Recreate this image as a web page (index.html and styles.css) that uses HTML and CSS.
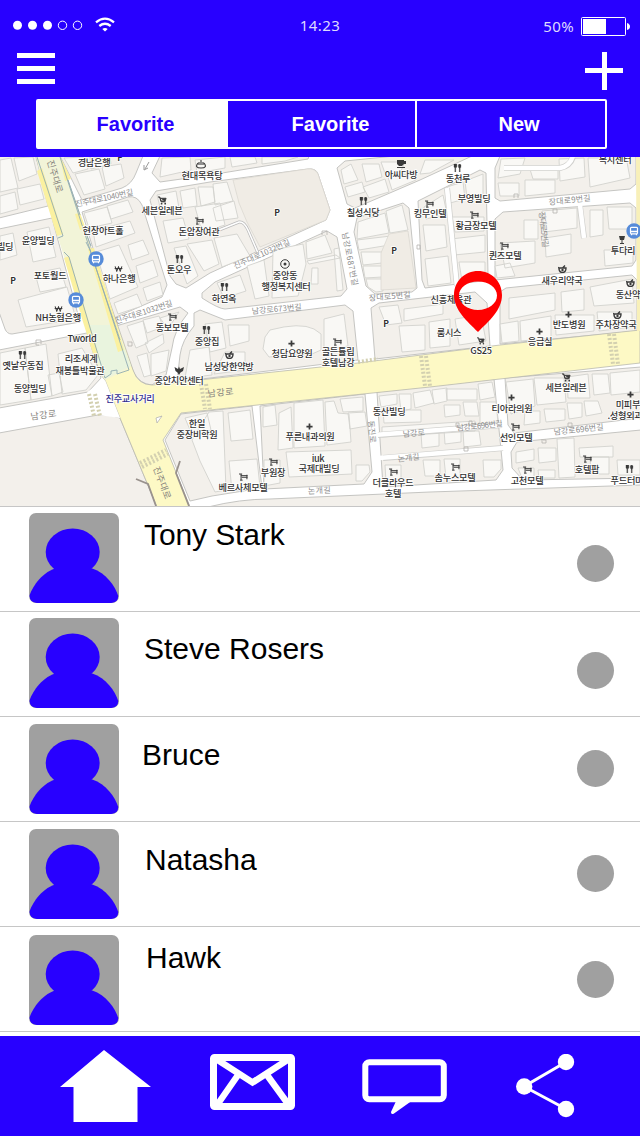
FILE: index.html
```html
<!DOCTYPE html>
<html lang="en">
<head>
<meta charset="utf-8">
<title>Favorites</title>
<link rel="stylesheet" href="styles.css">
</head>
<body>
<svg class="defs" width="0" height="0" aria-hidden="true">
  <symbol id="avatar" viewBox="0 0 90 90"><ellipse cx="43.7" cy="39" rx="27" ry="23.5"/><path d="M26 55.500C12 60 2 76 .5 83Q1 90 8 90H82Q89 90 89.3 83C86 73 77 60 63.3 55.500Z"/></symbol>
  <symbol id="fork" viewBox="0 0 10 9"><path d="M1 0V3Q1 4 2 4V9H3V4Q4.300 4 4.300 3V0M2.600 0V4M7 9V5Q5.800 4 5.800 2T7.400 0Q9 0 9 2T8 5V9Z" fill="#3a3a3a" stroke="#3a3a3a" stroke-width=".3"/></symbol>
  <symbol id="bed" viewBox="0 0 10 8"><path d="M0 .7H3.500M1.200 7.500H4M2.300 .7V7.500M2 2.500H9.500M3 4.300H9.500M8.800 1.500V6.500" fill="none" stroke="#3a3a3a" stroke-width="1.100"/></symbol>
  <symbol id="cart" viewBox="0 0 10 9"><path d="M0 .5H2L3.500 6H8.500M2.300 2H9L8 5H3Z" fill="#3a3a3a" stroke="#3a3a3a"/><circle cx="4" cy="8" r="1"/><circle cx="8" cy="8" r="1"/></symbol>
  <symbol id="cross" viewBox="0 0 8 8"><path d="M4 .5V7.500M.5 4H7.500" stroke="#3a3a3a" stroke-width="2"/></symbol>
  <symbol id="won" viewBox="0 0 9 7"><path d="M.5 .5L2.500 6L4.500 1L6.500 6L8.500 .5M0 3H9" fill="none" stroke="#3a3a3a" stroke-width="1.200"/></symbol>
  <symbol id="pot" viewBox="0 0 9 8"><path d="M1 3H8Q8 7.500 4.500 7.500T1 3L0 2.500M4.500 3L7 .5" fill="none" stroke="#3a3a3a" stroke-width="1.400"/><circle cx="4.500" cy="5" r="1.200"/></symbol>
  <symbol id="bus" viewBox="0 0 16 16"><circle cx="8" cy="8" r="7.700" fill="#568bd9"/><rect x="4.500" y="4.300" width="7" height="6.500" rx="1" fill="none" stroke="#fff" stroke-width="1.200"/><path d="M4.500 8.500H11.500M5.500 12.300V11M10.500 12.300V11" stroke="#fff" stroke-width="1.300"/></symbol>
</svg>

<header class="header">
  <div class="status">
    <svg class="signal" width="104" height="18" viewBox="12 15 104 18">
      <g fill="#fff"><circle cx="17.500" cy="25.300" r="4.500"/><circle cx="32.500" cy="25.300" r="4.500"/><circle cx="47.500" cy="25.300" r="4.500"/></g>
      <g fill="none" stroke="#fff"><circle cx="62.500" cy="25.300" r="4.200"/><circle cx="77.500" cy="25.300" r="4.200"/></g>
      <path d="M96 22.300Q105 15 114 22.300M99.300 26Q105 21.600 110.700 26" fill="none" stroke="#fff" stroke-width="2.300"/><path d="M102.300 29Q105 27 107.700 29L105 31.500Z" fill="#fff"/>
    </svg>
    <span class="time">14:23</span>
    <span class="battery"><span>50%</span>
      <svg width="50" height="20" viewBox="0 0 50 20"><rect x=".5" y=".5" width="44" height="18" rx="1" fill="none" stroke="#fff"/><rect x="2" y="2" width="23" height="15" fill="#fff"/><path d="M46 6Q49 7 49 9.500T46 13Z" fill="#fff"/></svg>
    </span>
  </div>
  <div class="actions">
    <svg width="38" height="31" viewBox="0 0 38 31"><path d="M0 2.500H38M0 15.500H38M0 28.500H38" stroke="#fff" stroke-width="5"/></svg>
    <svg width="38" height="38" viewBox="0 0 38 38"><path d="M0 18.500H38M19.500 0V38" stroke="#fff" stroke-width="5"/></svg>
  </div>
  <nav class="tabs">
    <a class="tab tab-active">Favorite</a><a class="tab tab-middle">Favorite</a><a class="tab tab-last">New</a>
  </nav>
</header>

<svg class="map" width="640" height="349" viewBox="0 157 640 349">
  <rect x="0" y="157" width="640" height="349" fill="#fff"/>
  <g class="block">
    <path d="M-1 156H36L48 206L-1 218Z"/>
    <path d="M-1 229L52 218L80 322L12 334Q7 334 5 329L-1 312Z"/>
    <path d="M-1 350L87 333L101 378L88 392L-1 408Z"/>
    <path d="M-1 433L98 415Q110 414 120 418L157 507H-1Z"/>
    <path d="M60 156H143L136 173Q132 184 122 188L82 200Z"/>
    <path d="M82 212L128 197Q137 195 142 205L167 285L162 297L114 318Z"/>
    <path d="M160 156L152 173L160 182L210 175L308 159L309 156Z"/>
    <path d="M150 200L156 191L210 182L308 169Q316 168 318 174L330 210L326 220L210 273L186 288L176 284L170 276Z"/>
    <path d="M202 293L215 282L327 231L337 237L347 289L341 296L225 309Q219 309 202 298Z"/>
    <path d="M194 313L200 310L225 320L345 305L353 311L358 360L177 382L180 355Q182 340 194 326Z"/>
    <path d="M116 326L180 307L188 313Q174 330 172 348L166 375L152 385Q140 384 134 373Z"/>
    <path d="M337 168L345 161L395 156H472L420 180L355 208L347 204Z"/>
    <path d="M357 218L403 203L409 208L417 288L412 292L375 294L366 286L354 232Z"/>
    <path d="M418 201L480 170L486 173L488 275L482 281L425 288L422 280Z"/>
    <path d="M500 156L495 168V198L500 201L630 189L636 184V156Z"/>
    <path d="M495 219L503 212L630 203L636 208V260L632 266L495 280Z"/>
    <path d="M371 308L379 303L475 292L487 303L490 346L375 359Z"/>
    <path d="M500 292L506 288L632 275L637 280V331L500 344Z"/>
    <path d="M181 414L252 406L262 488L212 496L190 501L165 440Z"/>
    <path d="M260 406L365 394L372 472L364 484L264 489Z"/>
    <path d="M377 392L494 379L503 470L496 480L383 487Z"/>
    <path d="M505 378L641 367V418L514 433L508 425Z"/>
    <path d="M517 442L641 430V478L523 480L512 468L511 452Z"/>
    <path d="M208 507Q240 499 270 499L430 492L641 485V507Z"/>
  </g>
  <g class="parcel">
    <path d="M0 160L11 158L18 188L0 192ZM14 158L33 157L37 174L19 181ZM17 189L40 184L44 199L20 205ZM0 196L15 192L18 209L0 214ZM27 232L49 227L56 257L33 262ZM0 236L13 233L17 255L0 260ZM35 273L60 268L66 287L40 292ZM18 300L67 287L76 319L26 327Z"/>
    <path d="M0 353L25 348L31 400L0 405ZM25 348L46 344L52 396L31 400ZM58 354L82 348L98 375L86 390L62 394ZM48 375L59 373L63 392L52 396Z"/>
    <path d="M64 158L83 157L88 169L73 173ZM75 174L99 169L105 189L84 195ZM102 167L121 164L124 178L106 186ZM90 157L110 157L111 164L91 169ZM84 213L107 207L112 223L89 228ZM107 206L128 200L133 212L111 219ZM93 231L130 221L135 233L96 247ZM96 252L119 245L138 287L110 299ZM128 245L143 240L149 254L132 260ZM136 266L153 260L158 276L140 283ZM114 303L137 294L142 306L118 314ZM143 288L160 282L163 295L147 301Z"/>
    <path d="M162 158L190 157L191 170L160 177ZM195 160L225 157V168L197 173ZM230 157H255L257 163L232 167ZM262 157H298L285 161L262 164Z"/>
    <path d="M157 195L176 191L179 208L161 211ZM180 191L195 188L197 206L183 208ZM198 187H213L215 202L201 206ZM213 184L227 182L233 201L215 205ZM163 221L183 218L189 239L168 243ZM195 207L220 203L225 225L202 232ZM174 248L186 246L198 276L187 284ZM187 244L212 240L219 264L204 271ZM214 238L237 234L250 256L222 267ZM213 208L234 201L238 218L216 221Z"/>
    <path d="M273 250L303 244L306 264L298 296L272 298ZM247 266L264 260L269 296L255 299ZM217 283L240 275L246 291L224 298ZM306 242L325 235L332 253L307 259ZM307 261L336 255L340 258L309 264ZM312 268H318V284H311ZM334 249L339 248L343 290L337 291Z"/>
    <path d="M270 330Q300 322 314 329L321 334V350L312 354L269 357L263 349L265 337ZM324 319L344 314L348 346L324 350ZM205 324L222 322L226 348L210 352ZM228 325H249V341L230 346ZM190 350L209 347L212 375L185 378ZM225 352H245V370L214 374Z"/>
    <path d="M127 326L143 321L148 343L136 348ZM143 320L159 316L163 327L147 333ZM160 318L179 312L168 329ZM145 343L163 334L164 343L149 353ZM151 354L169 350L166 371L151 376ZM137 356L147 353L151 375L144 377Z"/>
    <path d="M341 170L351 164L358 180L344 184ZM362 164H379L382 177L366 182ZM381 162H405L400 173L386 176ZM345 187L362 182L365 192L348 197ZM363 187L385 179L389 192L369 198ZM388 177L415 173L416 180L392 190ZM425 160H454L430 173L420 174Z"/>
    <path d="M358 222L385 213L389 233L357 239ZM386 211L402 205L408 230L390 233ZM357 240L408 234V242L359 250ZM361 252H382V263L363 265ZM363 266H382V277L365 278ZM366 279H383V291L376 292L368 287Z"/>
    <path d="M424 207L443 195L447 214L426 219ZM447 187L463 182L465 199L450 203ZM465 181L483 174V195L467 198ZM423 225H445L447 247L426 251ZM452 217H484V231L455 232ZM451 239L485 235V252L454 255ZM425 259L448 256L451 283L428 286ZM459 262H485V273L479 279L462 281ZM379 307L398 305L402 323L386 325ZM404 309L443 304V314L404 321ZM399 326L425 325V350L402 352ZM429 322L450 319V346L430 348ZM455 319L481 315L486 341L459 345Z"/>
    <path d="M501 159L525 158L520 174L498 178ZM529 166H558V179H533ZM525 180H555V193L525 196ZM559 159L584 158L585 177L560 181ZM588 158H611L626 157L630 178L590 187ZM498 183H519V196H500ZM524 220H538V239H524ZM542 211L577 208V228L544 232ZM500 243L535 241V263L505 268ZM545 238L571 234V253L546 257ZM590 210H603V235L590 237ZM607 207H632V229H609ZM604 250H633V263L605 266ZM495 266L510 263L515 276L497 278Z"/>
    <path d="M509 298L555 293V310L509 319ZM561 292L584 289V310L562 312ZM590 287L632 279L634 303L594 306ZM500 324L518 321L519 341L502 343ZM520 321L551 316V338L521 341ZM555 315H594V331L556 335ZM597 312H632V327L599 331Z"/>
    <path d="M185 418L207 413L211 430L199 435L190 430ZM209 412L223 411L226 490L215 492L200 461L192 440ZM228 413L250 410L253 439L231 441ZM229 461L257 459L260 487L232 491ZM263 407L275 405L277 425L263 427ZM279 413L291 407L293 448L278 450ZM294 403L323 400L325 446L294 448ZM325 402L334 401L338 413L349 414L351 442L327 445ZM340 399L363 397V411L343 412ZM348 413L365 412L367 426L350 429ZM286 452L351 450L352 474L289 477ZM264 460H280V483L264 486ZM356 465H369L370 472L362 481H356Z"/>
    <path d="M379 396L397 394V404L381 407ZM399 394H411V409L401 411ZM413 393L430 390L434 403L415 408ZM383 410H421V422L384 423ZM432 390L447 388V401L434 404ZM446 389H477V400H447ZM478 384L492 382L495 397L480 400ZM444 405H460V415L445 417ZM463 402H477L479 416H465ZM480 402H496L498 423L480 424ZM421 433H439V446L422 448ZM444 429H461V442L445 444ZM463 431H479L481 445L464 447ZM385 465H401V479L386 482ZM423 460H440V476H425ZM444 459H460V477L446 478ZM483 460H501V469L494 477H484ZM382 427L475 421V431L382 437Z"/>
    <path d="M506 382L533 379L535 406L511 414ZM534 378H564L566 402L537 405ZM567 377L588 374L590 398H568ZM592 374H608L610 393L594 395ZM610 373L640 370V392L611 395ZM525 411H540V423L524 425ZM544 409H565V420L546 422ZM567 403H582V417L569 419ZM584 401H598L602 413L586 416ZM516 452L534 449V460L516 463ZM538 448H556V461L539 463ZM557 439L574 438L575 477L559 478ZM579 448L613 446V457H580ZM518 468H534V478H522ZM538 470H555V478H539ZM590 457H609V474H591ZM617 460H640V475H618Z"/>
  </g>
  <g fill="#f0ece5" stroke="#d8d5cf" stroke-width=".7"><path d="M233 180L307 169Q315 168 318 174L330 210L326 220L260 247L247 222L239 203Z"/><path d="M389 234L408 231L416 288L381 290V253Z"/></g>
  <g fill="none" stroke="#d0d0cd" stroke-width="6"><path d="M447 188L457 286"/><path d="M378 435L502 425M383 458L503 448"/><path d="M580 207L584 238M504 168H560Q570 166 573 157"/></g>
  <g fill="none" stroke="#fff" stroke-width="4.500"><path d="M447 188L457 287"/><path d="M374 435L504 425M379 458L504 448"/><path d="M580 205L584 238M504 168H560Q570 166 573 156"/></g>
  <path d="M219 230L239 222Q244 221 248 230L258 253" fill="none" stroke="#bbb" stroke-width="3"/><path d="M219 230L239 222Q244 221 248 230L258 253" fill="none" stroke="#fff" stroke-width="1.500"/>

  <path d="M36 157H60L133 370Q138 385 152 385L358 363L500 345L640 330V363L430 387L181 413L163 440L190 507H157L120 418L105 380L100 374Z" fill="#fdf9c5" stroke="#b9b9af" stroke-width=".8"/>
  <path d="M36 157H60L130 368L105 380L101 374L48 206Z" fill="#f2f4d8"/>
  <path d="M86 325H116L131 366L105 378Z" fill="#e9f4de"/>
  <path d="M105 380L120 418L98 415L87 392Z" fill="#fff"/>
  <path d="M156 418L162 416L157 423Z" fill="#fff" stroke="#aaa" stroke-width=".7"/>
  <path d="M37 171L42 168L63 234L57 236ZM60 157L64 164L71 179L65 181ZM75 214L80 213L86 229L80 230ZM64 258L69 256L88 319L99 357L95 360L83 322ZM88 249L94 248L124 350L118 352Z" fill="#fbf1a0"/>
  <path d="M37 157L63 236L58 238M64 252L69 257L105 378L111 374V371L117 370V374L129 370L60 157M68 180L80 215M84 228L91 246M86 242L90 250L120 340" fill="none" stroke="#91abb2" stroke-width=".9"/>
  <path d="M636 157H641V331H637Z" fill="#f8f0b9"/>
  <path d="M136 479L148 484L156 506M180 461L176 473L189 506" fill="none" stroke="#99928d" stroke-width="1.800"/>
  <g fill="none" stroke="#d3d0b0" stroke-width="4" stroke-dasharray="2 2"><path d="M201 384L205 409M206 384L210 409M421 356L425 386M426 356L430 386M609 334L613 364M614 334L618 364M140 463L166 450M142 467L168 454M358 362L378 359M89 394L94 416M95 394L100 416"/></g>
  <g class="corner"><path d="M36 340H41V344M36 340V345H39M128 341V346H132V342H129M322 231H327V235M322 231V235M417 245H420V249H417ZM514 194V198M514 194H518V198M553 209H557V213H553ZM456 423H459V427H456ZM469 421H472V425H469ZM464 447H468V451H464ZM568 423H572V427H568ZM542 439V443H546V440H543"/></g>

  <g class="street">
    <text transform="translate(76 207) rotate(-12)" textLength="59">진주대로1040번길</text>
    <text transform="translate(116 324) rotate(-18)" textLength="60">진주대로1032번길</text>
    <text transform="translate(235 269) rotate(-24)" textLength="61">진주대로1032번길</text>
    <text transform="translate(252 314) rotate(-5)" textLength="50">남강로673번길</text>
    <text transform="translate(342 233) rotate(79)" textLength="54">남강로687번길</text>
    <text transform="translate(369 301) rotate(-5)" textLength="42">장대로5번길</text>
    <text transform="translate(549 205) rotate(-6)" textLength="42">장대로9번길</text>
    <text transform="translate(539 212) rotate(84)" textLength="36">장대로5번길</text>
    <text transform="translate(457 431) rotate(-6)" textLength="46">남강로696번길</text>
    <text transform="translate(554 435) rotate(-6)" textLength="50">남강로696번길</text>
    <text transform="translate(308 494) rotate(-3)" textLength="23">논개길</text>
    <text transform="translate(398 462) rotate(-7)">논개길</text>
    <text transform="translate(403 437) rotate(-5)">남강로</text>
    <text transform="translate(368 421) rotate(84)">동진로</text>
    <text class="road" transform="translate(31 420) rotate(-8)" textLength="26">남강로</text>
    <text class="road" transform="translate(208 397) rotate(-6)" textLength="26">남강로</text>
    <text class="road" transform="translate(47 161) rotate(73)" textLength="34">진주대로</text>
    <text class="road" transform="translate(153 468) rotate(69)" textLength="34">진주대로</text>
  </g>
  <g class="place">
    <text x="94" y="166">경남은행</text><text x="120" y="161" class="parking">P</text><text x="202" y="179">현대목욕탕</text>
    <text x="162" y="214">세븐일레븐</text><text x="103" y="234">현장아트홀</text><text x="199" y="235">돈암장여관</text>
    <text x="38" y="244">윤양빌딩</text><text x="1" y="250">신빌딩</text><text x="50" y="279">포토월드</text><text x="13" y="284" class="parking">P</text>
    <text x="119" y="282">하나은행</text><text x="179" y="273">톤오우</text><text x="224" y="302">하연옥</text><text x="58" y="321">NH농협은행</text>
    <text x="172" y="331">동보모텔</text><text x="207" y="345">중앙집</text><text x="82" y="342">Tworld</text><text x="81" y="362">리조세계</text><text x="80" y="373.500">재봉틀박물관</text>
    <text x="23" y="369">옛날우동집</text><text x="30" y="392">동양빌딩</text><text x="179" y="384">중안치안센터</text><text x="229" y="370">남성당한약방</text>
    <text x="130" y="402" class="crossing">진주교사거리</text><text x="197" y="426.500">한일</text><text x="197" y="438">중장비학원</text>
    <text x="277" y="216" class="parking">P</text><text x="285" y="279">중앙동</text><text x="286" y="290">행정복지센터</text>
    <text x="401" y="178">아씨다방</text><text x="363" y="216">칠성식당</text><text x="394" y="254" class="parking">P</text><text x="386" y="327" class="parking">P</text>
    <text x="458" y="182">동천루</text><text x="474" y="202">부영빌딩</text><text x="430" y="217">킹무인텔</text><text x="476" y="229">황금장모텔</text>
    <text x="505" y="259">퀸즈모텔</text><text x="562" y="284">새우리약국</text><text x="623" y="254">투다리</text><text x="615" y="163">복지센터</text><text x="632" y="298">동산약국</text>
    <text x="451" y="303">신흥체육관</text><text x="569" y="328">반도병원</text><text x="616" y="328">주차장약국</text><text x="449" y="336">룸시스</text><text x="481" y="354">GS25</text><text x="540" y="345">응급실</text>
    <text x="292" y="357">청담요양원</text><text x="338" y="355">골든튤립</text><text x="338" y="366">호텔남강</text>
    <text x="310" y="440">푸른내과의원</text><text x="318" y="461.500">iuk</text><text x="319" y="472">국제대빌딩</text><text x="273" y="476">부원장</text><text x="243" y="491">베르사체모텔</text>
    <text x="389" y="415">동산빌딩</text><text x="393" y="486">더클라우드</text><text x="393" y="497">호텔</text><text x="566" y="391">세븐일레븐</text>
    <text x="512" y="412">티아라의원</text><text x="516" y="441">선인모텔</text><text x="455" y="481">솜누스모텔</text><text x="527" y="484">고천모텔</text>
    <text x="587" y="473">호텔팝</text><text x="631" y="484">푸드터미널</text><text x="632" y="408">미피부과</text><text x="629" y="419">.성형외과의</text>
  </g>
  <g fill="#3a3a3a">
    <use href="#bus" x="88" y="251" width="16" height="16"/><use href="#bus" x="68" y="292" width="16" height="16"/><use href="#bus" x="626" y="223" width="16" height="16"/>
    <use href="#cart" x="158" y="196" width="9" height="9"/><use href="#cart" x="477" y="337" width="8" height="8"/><use href="#cart" x="562" y="373" width="9" height="9"/>
    <use href="#bed" x="195" y="217" width="9" height="8"/><use href="#bed" x="168" y="313" width="9" height="8"/><use href="#bed" x="425" y="200" width="9" height="8"/><use href="#bed" x="470" y="211" width="9" height="8"/><use href="#bed" x="500" y="242" width="9" height="8"/><use href="#bed" x="333" y="338" width="9" height="8"/><use href="#bed" x="269" y="458" width="9" height="8"/><use href="#bed" x="239" y="473" width="9" height="8"/><use href="#bed" x="389" y="468" width="9" height="8"/><use href="#bed" x="511" y="423" width="9" height="8"/><use href="#bed" x="451" y="463" width="9" height="8"/><use href="#bed" x="523" y="466" width="9" height="8"/><use href="#bed" x="583" y="455" width="9" height="8"/>
    <use href="#fork" x="175" y="255" width="9" height="8"/><use href="#fork" x="220" y="283" width="9" height="8"/><use href="#fork" x="202" y="326" width="9" height="8"/><use href="#fork" x="18" y="351" width="9" height="8"/><use href="#fork" x="359" y="197" width="9" height="8"/><use href="#fork" x="453" y="164" width="9" height="8"/><use href="#fork" x="625" y="465" width="9" height="8"/>
    <use href="#won" x="114" y="266" width="9" height="6"/><use href="#won" x="54" y="306" width="9" height="6"/>
    <use href="#cross" x="288" y="340" width="7" height="7"/><use href="#cross" x="306" y="423" width="7" height="7"/><use href="#cross" x="565" y="311" width="7" height="7"/><use href="#cross" x="536" y="328" width="7" height="7"/><use href="#cross" x="508" y="394" width="7" height="7"/><use href="#cross" x="627" y="391" width="7" height="7"/>
    <use href="#pot" x="225" y="351" width="9" height="8"/><use href="#pot" x="558" y="265" width="9" height="8"/><use href="#pot" x="626" y="279" width="9" height="8"/><use href="#pot" x="613" y="311" width="9" height="8"/>
    <path d="M174.500 367L178 369L179 366.500L180 369L184 367L183 371L180.500 372.500L179 375L177.500 372.500L175.500 371Z"/>
    <path d="M397 160H404V164L402 166H399L397 164ZM404 161H406V164H404M397 167H405V168H397ZM619 236H625L624 240H622.500V243H624V244H620V243H621.500V240H620Z"/>
    <path d="M198 163Q194 168 201 168T204 163M199 165V162M201 165V160M203 165V162" fill="none" stroke="#3a3a3a" stroke-width="1.100"/>
    <circle cx="285" cy="264" r="4.300" fill="none" stroke="#3a3a3a"/><circle cx="285" cy="264" r="1.500"/>
    <path d="M149 162L145 169M144 165V170L148 168" fill="none" stroke="#999"/>
  </g>
  <path d="M478 271C491 271 502 281 502 295C502 310 489 321 478 332C467 321 454 310 454 295C454 281 465 271 478 271ZM478 281.500C467.500 281.500 459 287.500 459 295.500S467.500 310 478 310S497 303.500 497 295.500S488.500 281.500 478 281.500Z" fill="#f00" fill-rule="evenodd"/>
</svg>

<main class="contacts">
  <div class="contact contact-tony"><svg class="avatar"><use href="#avatar"/></svg><span class="name">Tony Stark</span><i class="dot"></i></div>
  <div class="contact contact-steve"><svg class="avatar"><use href="#avatar"/></svg><span class="name">Steve Rosers</span><i class="dot"></i></div>
  <div class="contact contact-bruce"><svg class="avatar"><use href="#avatar"/></svg><span class="name">Bruce</span><i class="dot"></i></div>
  <div class="contact contact-natasha"><svg class="avatar"><use href="#avatar"/></svg><span class="name">Natasha</span><i class="dot"></i></div>
  <div class="contact contact-hawk"><svg class="avatar"><use href="#avatar"/></svg><span class="name">Hawk</span><i class="dot"></i></div>
</main>

<footer class="footer">
  <svg class="home" width="91" height="72" viewBox="60 1050 91 72"><path d="M104 1050L151 1087H137.500V1122H73.500V1087H60Z" fill="#fff"/></svg>
  <svg class="mail" width="85" height="56" viewBox="210 1054 85 56"><rect x="213.500" y="1057.500" width="78" height="49" rx="1" fill="none" stroke="#fff" stroke-width="7"/><path d="M213 1057L252.500 1082.500L292 1057M238 1075L215 1108M267 1075L291 1108" fill="none" stroke="#fff" stroke-width="6.500"/></svg>
  <svg class="chat" width="85" height="56" viewBox="362 1059 85 56"><rect x="365.300" y="1062.300" width="78.500" height="37" rx="4" fill="none" stroke="#fff" stroke-width="6"/><path d="M397 1099L391 1112Q391 1115 394 1113.500L413 1100Z" fill="#fff"/></svg>
  <svg class="share" width="59" height="64" viewBox="516 1054 59 64"><path d="M566 1062L524 1086.500L566 1109" fill="none" stroke="#fff" stroke-width="3"/><g fill="#fff"><circle cx="566" cy="1062" r="8.200"/><circle cx="524.200" cy="1086.500" r="8.200"/><circle cx="566" cy="1109" r="8.200"/></g></svg>
</footer>
</body>
</html>
```

FILE: styles.css
```css
* { box-sizing: border-box; }
body { margin: 0; width: 640px; height: 1136px; overflow: hidden; display: flex; flex-direction: column; background: #fff; font-family: "Liberation Sans", "Noto Sans CJK KR", sans-serif; }
svg { display: block; flex: none; }
.header { height: 157px; flex: none; background: #2800ff; color: #fff; }
.status { height: 52px; display: grid; grid-template-columns: 200px 1fr 200px; align-items: start; font: 15px/20px "Noto Sans", sans-serif; letter-spacing: .4px; color: #dedaff; }
.signal { margin: 15px 0 0 12px; }
.time { text-align: center; padding-top: 15px; }
.battery { display: flex; justify-content: flex-end; gap: 7px; padding: 17px 9px 0 0; }
.battery span { margin-top: -1px; }
.actions { height: 47px; display: flex; justify-content: space-between; align-items: flex-start; padding: 0 17px; }
.actions svg:first-child { margin-top: 1px; }
.tabs { width: 571px; height: 50px; margin-left: 36px; display: grid; grid-template-columns: 190px 189px 188px; border: 2px solid #fff; border-radius: 2px; font-size: 20px; font-weight: bold; line-height: 46px; text-align: center; }
.tab-active { background: #fff; color: #2800ff; padding-left: 5px; }
.tab-middle { border-right: 2px solid #fff; padding-left: 18px; }
.tab-last { padding-left: 16px; }
.map { overflow: hidden; font-family: "Noto Sans CJK KR", sans-serif; }
.block { fill: #f3f0eb; stroke: #c5c5c2; stroke-width: 1; }
.parcel { fill: #f9f8f5; stroke: #d3d2ce; stroke-width: .9; }
.corner { fill: none; stroke: #b5b2ae; stroke-width: .8; }
.street { font-size: 8px; fill: #8d8d8d; }
.road { font-size: 9px; fill: #85827c; }
.place { font-size: 9.2px; font-weight: 500; letter-spacing: -.3px; text-anchor: middle; fill: #303030; stroke: #fff; stroke-width: 1.5px; paint-order: stroke; }
.parking { font-size: 8.5px; font-weight: bold; }
.crossing { fill: #343090; }
.contacts { height: 530px; flex: none; }
.contact { height: 105px; border-top: 1px solid #c6c6c6; display: flex; align-items: flex-start; padding: 0 26px 0 29px; }
.contact:last-child { height: 106px; border-bottom: 1px solid #c6c6c6; }
.avatar { width: 90px; height: 90px; margin-top: 6px; background: #a0a0a0; border-radius: 7px; fill: #2800ff; }
.name { flex: 1; font-size: 30px; line-height: 34px; color: #000; }
.dot { width: 37px; height: 37px; border-radius: 50%; background: #a0a0a0; }
.contact-tony .name { margin: 11px 0 0 25px; letter-spacing: -.1px; }
.contact-tony .dot { margin-top: 38px; }
.contact-steve .name { margin: 20px 0 0 25px; }
.contact-steve .dot { margin-top: 40px; }
.contact-bruce .avatar, .contact-natasha .avatar { margin-top: 7px; }
.contact-bruce .name { margin: 21px 0 0 23px; }
.contact-bruce .dot { margin-top: 33px; }
.contact-natasha .name { margin: 21px 0 0 26px; }
.contact-natasha .dot { margin-top: 33px; }
.contact-hawk .avatar { margin-top: 8px; }
.contact-hawk .name { margin: 14px 0 0 27px; }
.contact-hawk .dot { margin-top: 34px; }
.footer { height: 100px; flex: none; display: flex; align-items: flex-start; padding-left: 60px; background: #2800ff; }
.home { margin-top: 14px; }
.mail { margin: 18px 0 0 59px; }
.chat { margin: 23px 0 0 67px; }
.share { margin: 18px 0 0 69px; }
```
